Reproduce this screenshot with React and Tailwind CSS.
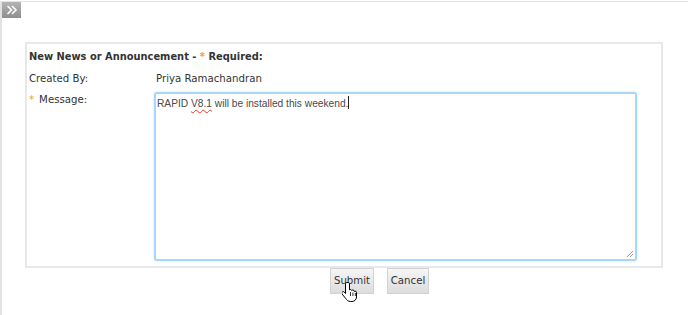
import React from "react";

function HandCursor() {
  return (
    <svg width="16" height="22" viewBox="0 0 16 22" className="absolute left-[11px] top-[12px]">
      <path
        d="M5 1.5c-.8 0-1.5.7-1.5 1.5v9.5l-1.3-1.4c-.6-.6-1.6-.6-2.1 0-.5.5-.5 1.3 0 1.9l3.7 4.6c.9 1.2 2.2 2.9 4.7 2.9h1.5c2.6 0 4.5-2 4.5-4.5v-4.5c0-.8-.6-1.4-1.4-1.4-.4 0-.7.1-.9.3 0-.8-.6-1.4-1.4-1.4-.5 0-.9.2-1.1.5-.2-.6-.7-1-1.3-1-.4 0-.7.1-.9.3V3c0-.8-.7-1.5-1.5-1.5z"
        fill="#fff"
        stroke="#000"
        strokeWidth="1"
        strokeLinejoin="round"
      />
      <path d="M8.5 11v4M10.9 11.5v3.5M13.3 12v3" stroke="#000" strokeWidth="0.8" />
    </svg>
  );
}

export default function App() {
  return (
    <div className="w-[688px] h-[315px] bg-white overflow-hidden pt-[1px] font-['DejaVu_Sans',Verdana,sans-serif] text-[10.2px] text-[#333]">
      <div className="border-t border-l-2 border-[#e2e2e2] h-[320px]">
        {/* collapse toggle */}
        <div className="w-[19px] h-[16px] bg-gradient-to-b from-[#b4b4b4] to-[#8e8e8e] flex items-center justify-center">
          <svg width="12" height="10" viewBox="0 0 12 10">
            <path d="M1.5 1l4 4-4 4M6 1l4 4-4 4" fill="none" stroke="#fff" strokeWidth="1.6" />
          </svg>
        </div>

        {/* form panel */}
        <div className="ml-[23px] mt-[24px] w-[638px] h-[226px] border-2 border-[#e8e8e8] pt-[4px] pl-[2px]">
          <div className="font-bold text-[9.9px] h-[18px] leading-[18px]">
            New News or Announcement - <span className="text-[#f0a020]">*</span> Required:
          </div>
          <div className="flex mt-[4px] h-[18px] leading-[18px]">
            <div className="w-[127px]">Created By:</div>
            <div>Priya Ramachandran</div>
          </div>
          <div className="flex mt-[4px]">
            <div className="w-[125px] pt-[1px] leading-[14px]">
              <span className="text-[#f0a020] mr-[5px]">*</span>Message:
            </div>
            <div className="relative w-[483px] h-[169px] border-2 border-[#a9d5f6] rounded-[3px] shadow-[0_0_3px_#cfe8fb] bg-white px-[1px] pt-[2px] font-['Liberation_Sans',Arial,sans-serif] text-[10.2px] text-[#4a4a4a] leading-[14px]">
              RAPID <span className="underline decoration-wavy decoration-[#e33] decoration-1 underline-offset-2">V8.1</span> will be installed this weekend.
              <span className="inline-block w-[1px] h-[13px] bg-[#222] align-[-2px]"></span>
              <svg width="9" height="9" viewBox="0 0 9 9" className="absolute right-[1px] bottom-[1px]">
                <path d="M8 2L2 8M8 5L5 8" stroke="#999" strokeWidth="1" />
              </svg>
            </div>
          </div>
        </div>

        {/* buttons */}
        <div className="flex gap-[13px] ml-[328px]">
          <div className="relative w-[44px] h-[26px] border border-[#d2d2d2] bg-gradient-to-b from-[#f6f6f6] to-[#dcdcdc] flex items-center justify-center">
            Submit
            <HandCursor />
          </div>
          <div className="w-[42px] h-[26px] border border-[#d2d2d2] bg-gradient-to-b from-[#f6f6f6] to-[#dcdcdc] flex items-center justify-center">
            Cancel
          </div>
        </div>
      </div>
    </div>
  );
}
